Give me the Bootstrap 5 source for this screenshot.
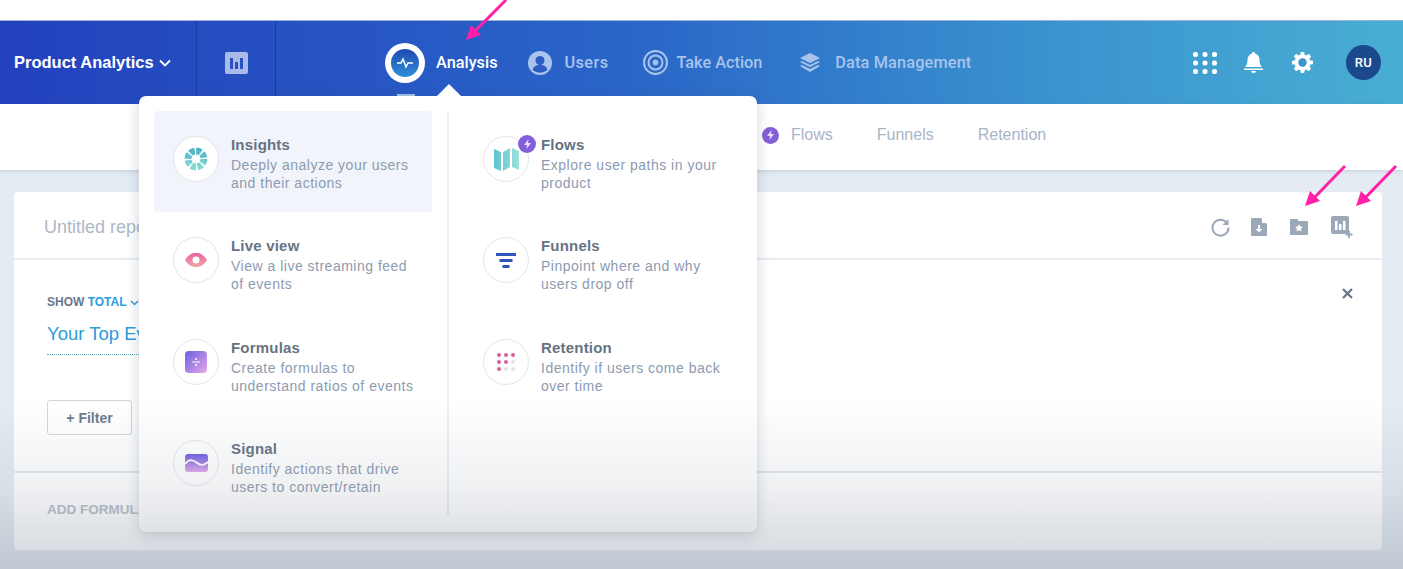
<!DOCTYPE html>
<html lang="en">
<head>
    <meta charset="UTF-8">
    <title>Product Analytics</title>
    <link href="https://cdn.jsdelivr.net/npm/bootstrap@5.3.0/dist/css/bootstrap.min.css" rel="stylesheet">
    <style>
        html, body { height: 569px; overflow: hidden; }
        body { background: #e4ebf2; font-family: "Liberation Sans", Arial, sans-serif; position: relative; }
        .top-gap { height: 20px; background: #fff; }
        .app-head { height: 84px; background: linear-gradient(90deg, #2340bd 0%, #2a66c8 45%, #3a93cf 75%, #49aed3 100%); color: #fff; border-top: 1px solid #9fb0d6; }
        .brand-cell { width: 197px; padding-left: 14px; font: 700 16.5px "Liberation Sans", sans-serif; border-right: 1px solid #1c3aa0; }
        .chart-cell { width: 79px; border-right: 1px solid #1c3aa0; }
        .main-nav { margin-left: 109px; font: 500 16.3px Roboto, sans-serif; color: #a9c4ec; }
        .main-nav .on { color: #fff; }
        .main-nav .wide-a { letter-spacing: .4px; margin-left: 13px; }
        .main-nav .wide-b { letter-spacing: .15px; margin-left: 14px; }
        .ring-logo { width: 40px; height: 40px; border-radius: 50%; background: #fff; margin-right: 11px; }
        .ring-inner { width: 28px; height: 28px; border-radius: 50%; background: linear-gradient(180deg, #1f4bb3, #2f8fd6); }
        .right-tools { margin-left: auto; padding-right: 22px; }
        .avatar-ru { width: 35px; height: 35px; border-radius: 50%; background: #1b4a8c; font: 500 13px Roboto, sans-serif; letter-spacing: .3px; }
        .sub-nav { height: 66px; background: #fff; box-shadow: 0 1px 4px rgba(100,120,150,.25); padding-left: 762px; padding-bottom: 4px; color: #a8b5c6; font: 16px "Liberation Sans", sans-serif; }
        .bolt-dot { width: 17px; height: 17px; border-radius: 50%; background: #8460d8; }
        .report-box { margin: 22px 21px 0 14px; height: 358px; background: #fff; border-radius: 4px; }
        .report-top { height: 68px; border-bottom: 2px solid #e9edf2; padding: 4px 29px 0 30px; color: #adb8c6; font-size: 18px; }
        .report-mid { height: 213px; border-bottom: 2px solid #e5e8ec; padding: 34px 29px 0 33px; position: relative; }
        .show-line { font-size: 12px; font-weight: 700; color: #67778c; line-height: 16px; }
        .show-line b { color: #2d9bdc; }
        .top-events { font-size: 18.5px; line-height: 24px; color: #2d9bdc; margin-top: 12px; padding-bottom: 8px; width: 240px; border-bottom: 1px dotted #5fa8b5; }
        .filter-btn { margin-top: 45px; width: 85px; height: 35px; font: 700 14px "Liberation Sans", sans-serif; color: #6c7b8f; background: #fff; border: 1px solid #cfd6df; border-radius: 3px; }
        .close-x { position: absolute; top: 28px; right: 29px; }
        .report-foot { padding: 27px 33px; font-size: 13.5px; font-weight: 700; color: #b4bdc9; }
        .menu-pop { position: absolute; left: 139px; top: 96px; width: 618px; height: 436px; background: #fff; border-radius: 7px; box-shadow: 0 3px 14px rgba(60,80,110,.25); padding: 15px; display: flex; }
        .menu-pop::before { content: ""; position: absolute; left: 298px; top: -12px; border: 12px solid transparent; border-top: 0; border-bottom-color: #fff; }
        .menu-left { width: 296px; padding-right: 15px; border-right: 2px solid #eceff3; height: 405px; }
        .menu-right { width: 294px; padding-left: 15px; }
        .menu-row { height: 101.3px; display: flex; padding: 24px 8px 0 19px; border-radius: 4px; }
        .menu-row.active { background: #f1f4fa; }
        .icon-circle { width: 46px; height: 46px; flex: none; border-radius: 50%; background: #fff; border: 1px solid #e3e5ea; margin-right: 12px; margin-top: 1px; position: relative; display: flex; align-items: center; justify-content: center; }
        .row-title { font-size: 15px; font-weight: 700; line-height: 19px; color: #667383; letter-spacing: .2px; }
        .row-text { font-size: 14px; line-height: 18px; color: #8d9bb0; margin-top: 2px; letter-spacing: .5px; }
        .flow-badge { position: absolute; top: -2px; right: -8px; width: 18px; height: 18px; border-radius: 50%; background: #8460d8; display: flex; align-items: center; justify-content: center; }
        .tab-peek { position: absolute; left: 397px; top: 94px; width: 18px; height: 2px; background: #a9c4ec; }
        .pink-arrows { position: absolute; left: 0; top: 0; pointer-events: none; }
        .fade-low { position: absolute; left: 0; right: 0; top: 400px; height: 169px; pointer-events: none; background: linear-gradient(180deg, rgba(130,140,155,0) 0%, rgba(130,140,155,.12) 50%, rgba(130,140,155,.36) 100%); }
    </style>
</head>
<body>

<div class="top-gap"></div>

<!-- Header -->
<div class="app-head d-flex align-items-stretch">
    <div class="brand-cell d-flex align-items-center" style="gap:5px">
        Product Analytics
        <svg width="12" height="8" viewBox="0 0 12 8"><path d="M1 1.5l5 5 5-5" fill="none" stroke="#fff" stroke-width="1.8"/></svg>
    </div>
    <div class="chart-cell d-flex align-items-center justify-content-center">
        <svg width="23" height="22" viewBox="0 0 23 22"><rect width="23" height="22" rx="2" fill="#a9bbeb"/><path d="M5 6h3v11H5zM10 10h3v7h-3zM15 6h3v11h-3z" fill="#2a50bd"/></svg>
    </div>
    <div class="main-nav d-flex align-items-center">
        <div class="ring-logo d-flex align-items-center justify-content-center">
            <div class="ring-inner d-flex align-items-center justify-content-center">
                <svg width="18" height="12" viewBox="0 0 18 12"><path d="M1 6h4l2-4 3 8 2-4h5" fill="none" stroke="#fff" stroke-width="1.5"/></svg>
            </div>
        </div>
        <span class="on">Analysis</span>
        <svg style="margin-left:30px" width="24" height="24" viewBox="0 0 24 24"><circle cx="12" cy="12" r="12" fill="#a9c4ec"/><circle cx="12" cy="9.5" r="4.5" fill="#2a5cc4"/><path d="M4.5 19c1-4 4-5 7.500-5s6.500 1 7.500 5a12 12 0 0 1-15 0z" fill="#2a5cc4"/></svg>
        <span class="wide-a">Users</span>
        <svg style="margin-left:35px" width="25" height="25" viewBox="0 0 25 25" fill="none" stroke="#a9c4ec"><circle cx="12.500" cy="12.500" r="11.500" stroke-width="2"/><circle cx="12.500" cy="12.500" r="7" stroke-width="2"/><circle cx="12.500" cy="12.500" r="2.500" fill="#a9c4ec"/></svg>
        <span style="margin-left:8px">Take Action</span>
        <svg style="margin-left:37px" width="22" height="20" viewBox="0 0 22 20" fill="#a9c4ec"><path d="M11 0l10 5-10 5L1 5z"/><path d="M1 9l2-1 8 4 8-4 2 1-10 5z"/><path d="M1 13l2-1 8 4 8-4 2 1-10 6z"/></svg>
        <span class="wide-b">Data Management</span>
    </div>
    <div class="right-tools d-flex align-items-center">
        <svg width="24" height="22" viewBox="0 0 24 22" fill="#fff"><rect width="5" height="5" rx="2"/><rect x="9.500" width="5" height="5" rx="2"/><rect x="19" width="5" height="5" rx="2"/><rect y="8.500" width="5" height="5" rx="2"/><rect x="9.500" y="8.500" width="5" height="5" rx="2"/><rect x="19" y="8.500" width="5" height="5" rx="2"/><rect y="17" width="5" height="5" rx="2"/><rect x="9.500" y="17" width="5" height="5" rx="2"/><rect x="19" y="17" width="5" height="5" rx="2"/></svg>
        <svg style="margin-left:27px" width="19" height="21" viewBox="0 0 19 21" fill="#fff"><path d="M9.500 0c1 0 1.500.7 1.500 1.500C14 2.500 15.500 5 15.500 8c0 4 1 5.500 2.500 7H1c1.500-1.500 2.500-3 2.500-7 0-3 1.500-5.500 4.500-6.500C8 .7 8.500 0 9.500 0z"/><rect y="16.500" width="19" height="1.500"/><path d="M7 19h5a2.500 2 0 0 1-5 0z"/></svg>
        <svg style="margin-left:29px" width="21" height="21" viewBox="0 0 21 21"><g fill="#fff"><circle cx="10.500" cy="10.500" r="8"/><rect x="8.500" width="4" height="21" rx="1"/><rect x="8.500" width="4" height="21" rx="1" transform="rotate(45 10.500 10.500)"/><rect x="8.500" width="4" height="21" rx="1" transform="rotate(90 10.500 10.500)"/><rect x="8.500" width="4" height="21" rx="1" transform="rotate(135 10.500 10.500)"/></g><circle cx="10.500" cy="10.500" r="4.200" fill="#3a92cf"/></svg>
        <div class="avatar-ru d-flex align-items-center justify-content-center" style="margin-left:33px">RU</div>
    </div>
</div>

<!-- Tabs -->
<div class="sub-nav d-flex align-items-center">
    <span class="bolt-dot d-flex align-items-center justify-content-center">
        <svg width="7" height="10" viewBox="0 0 7 10"><path d="M4.500 0L0 6h3L2.500 10 7 4H4z" fill="#e8e0fa"/></svg>
    </span>
    <span style="margin-left:12px">Flows</span>
    <span style="margin-left:44px">Funnels</span>
    <span style="margin-left:44px">Retention</span>
</div>

<!-- Report -->
<div class="report-box">
    <div class="report-top d-flex align-items-center justify-content-between">
        <span>Untitled report</span>
        <div class="d-flex align-items-center">
            <svg width="19" height="19" viewBox="0 0 19 19" fill="none"><path d="M16 5a8 8 0 1 0 1.500 4.500" stroke="#9aa8b8" stroke-width="2"/><path d="M17.500 1v6h-6z" fill="#9aa8b8"/></svg>
            <svg style="margin-left:21px" width="16" height="18" viewBox="0 0 16 18"><path d="M1 0h9l6 6v11a1 1 0 0 1-1 1H1a1 1 0 0 1-1-1V1a1 1 0 0 1 1-1z" fill="#9aa8b8"/><path d="M11 0l5 5h-5z" fill="#fff"/><path d="M7 7h2v4h2.500L8 14.500 4.500 11H7z" fill="#fff"/></svg>
            <svg style="margin-left:23px" width="18" height="16" viewBox="0 0 18 16"><path d="M1 0h6l2 2h8a1 1 0 0 1 1 1v12a1 1 0 0 1-1 1H1a1 1 0 0 1-1-1V1a1 1 0 0 1 1-1z" fill="#9aa8b8"/><path d="M9 5l1.200 2.500 2.800.3-2 2 .5 2.700L9 11.200l-2.500 1.300.5-2.700-2-2 2.800-.3z" fill="#fff"/></svg>
            <svg style="margin-left:23px" width="22" height="22" viewBox="0 0 22 22"><rect width="18" height="18" rx="2" fill="#9aa8b8"/><path d="M4 5h2.500v9H4zM8 8h2.500v6H8zM12 5h2.500v9H12z" fill="#fff"/><path d="M17 15h2v2.500h2.500v2H19V22h-2v-2.500h-2.500v-2H17z" fill="#9aa8b8"/></svg>
        </div>
    </div>
    <div class="report-mid">
        <div class="show-line">SHOW <b>TOTAL</b> <svg width="9" height="6" viewBox="0 0 9 6"><path d="M1 1l3.500 3.500L8 1" fill="none" stroke="#2d9bdc" stroke-width="1.500"/></svg></div>
        <div class="top-events">Your Top Events</div>
        <button class="filter-btn">+ Filter</button>
        <svg class="close-x" width="11" height="11" viewBox="0 0 11 11"><path d="M1 1l9 9M10 1l-9 9" stroke="#64768a" stroke-width="2.200"/></svg>
    </div>
    <div class="report-foot">ADD FORMULA</div>
</div>

<div class="tab-peek"></div>

<!-- Analysis menu -->
<div class="menu-pop">
    <div class="menu-left">
        <div class="menu-row active">
            <div class="icon-circle">
                <svg width="24" height="24" viewBox="0 0 24 24" fill="none"><defs><linearGradient id="insG" x1="0" y1="0" x2="0" y2="1"><stop offset="0" stop-color="#4fb6c8"/><stop offset="1" stop-color="#86dcd2"/></linearGradient></defs><circle cx="12" cy="12" r="8" stroke="url(#insG)" stroke-width="7" stroke-dasharray="4.800 1.480"/></svg>
            </div>
            <div><div class="row-title">Insights</div><div class="row-text">Deeply analyze your users<br>and their actions</div></div>
        </div>
        <div class="menu-row">
            <div class="icon-circle">
                <svg width="22" height="14" viewBox="0 0 22 14"><defs><linearGradient id="eyeG" x1="0" y1="0" x2="0" y2="1"><stop offset="0" stop-color="#e85f9f"/><stop offset="1" stop-color="#f0a9a5"/></linearGradient></defs><path d="M0 7C4 1 7 0 11 0s7 1 11 7c-4 6-7 7-11 7S4 13 0 7z" fill="url(#eyeG)"/><circle cx="11" cy="7" r="3.500" fill="#fff"/></svg>
            </div>
            <div><div class="row-title">Live view</div><div class="row-text">View a live streaming feed<br>of events</div></div>
        </div>
        <div class="menu-row">
            <div class="icon-circle">
                <svg width="22" height="22" viewBox="0 0 22 22"><defs><linearGradient id="formG" x1="0" y1="0" x2="1" y2="1"><stop offset="0" stop-color="#6a5fe0"/><stop offset="1" stop-color="#e6a8ea"/></linearGradient></defs><rect width="22" height="22" rx="4" fill="url(#formG)"/><path d="M7 11h8" stroke="#fff" stroke-width="1"/><circle cx="11" cy="8" r="1" fill="#fff"/><circle cx="11" cy="14" r="1" fill="#fff"/></svg>
            </div>
            <div><div class="row-title">Formulas</div><div class="row-text">Create formulas to<br>understand ratios of events</div></div>
        </div>
        <div class="menu-row">
            <div class="icon-circle">
                <svg width="23" height="18" viewBox="0 0 23 18"><defs><linearGradient id="sigG" x1="0" y1="0" x2="0" y2="1"><stop offset="0" stop-color="#6a5fe0"/><stop offset="1" stop-color="#e2a6ea"/></linearGradient></defs><rect width="23" height="18" rx="3" fill="url(#sigG)"/><path d="M0 10c4-5 7-5 11.500-1.500S19 12 23 8" fill="none" stroke="#fff" stroke-width="1.800"/></svg>
            </div>
            <div><div class="row-title">Signal</div><div class="row-text">Identify actions that drive<br>users to convert/retain</div></div>
        </div>
    </div>
    <div class="menu-right">
        <div class="menu-row">
            <div class="icon-circle">
                <svg width="25" height="24" viewBox="0 0 25 24"><defs><linearGradient id="mapG" x1="0" y1="0" x2="1" y2="0"><stop offset="0" stop-color="#5cc4d0"/><stop offset="1" stop-color="#9fe0dc"/></linearGradient></defs><path d="M0 2l7 3v19l-7-3zM9 5l7-4v19l-7 4zM18 1l7 3v19l-7-3z" fill="url(#mapG)"/></svg>
                <span class="flow-badge"><svg width="7" height="10" viewBox="0 0 7 10"><path d="M4.500 0L0 6h3L2.500 10 7 4H4z" fill="#e8e0fa"/></svg></span>
            </div>
            <div><div class="row-title">Flows</div><div class="row-text">Explore user paths in your<br>product</div></div>
        </div>
        <div class="menu-row">
            <div class="icon-circle">
                <svg width="20" height="15" viewBox="0 0 20 15" fill="#2f55bd"><rect width="20" height="3"/><rect x="3.500" y="6" width="13" height="3"/><rect x="6.500" y="12" width="7" height="3"/></svg>
            </div>
            <div><div class="row-title">Funnels</div><div class="row-text">Pinpoint where and why<br>users drop off</div></div>
        </div>
        <div class="menu-row">
            <div class="icon-circle">
                <svg width="18" height="18" viewBox="0 0 18 18"><g fill="#d9609f"><circle cx="2" cy="2" r="2"/><circle cx="9" cy="2" r="2"/><circle cx="16" cy="2" r="2"/><circle cx="2" cy="9" r="2"/><circle cx="9" cy="9" r="2"/><circle cx="2" cy="16" r="2"/></g><g fill="#e2e4e8"><circle cx="16" cy="9" r="2"/><circle cx="9" cy="16" r="2"/><circle cx="16" cy="16" r="2"/></g></svg>
            </div>
            <div><div class="row-title">Retention</div><div class="row-text">Identify if users come back<br>over time</div></div>
        </div>
    </div>
</div>

<div class="fade-low"></div>

<svg class="pink-arrows" width="1403" height="569" viewBox="0 0 1403 569" fill="#ff1fa8" stroke="none">
    <path d="M506 0L475 31" stroke="#ff1fa8" stroke-width="3"/><path d="M466 40l5-15 10 10z"/>
    <path d="M1345 166l-31 32" stroke="#ff1fa8" stroke-width="3"/><path d="M1305 206l5-15 10 10z"/>
    <path d="M1396 166l-31 32" stroke="#ff1fa8" stroke-width="3"/><path d="M1356 206l5-15 10 10z"/>
</svg>

<script src="https://cdn.jsdelivr.net/npm/bootstrap@5.3.0/dist/js/bootstrap.bundle.min.js"></script>
</body>
</html>
